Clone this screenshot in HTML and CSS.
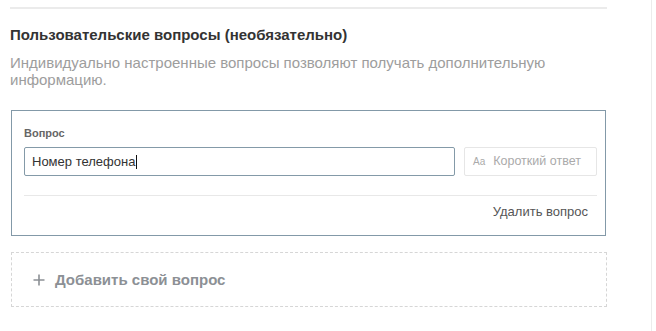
FILE: index.html
```html
<!DOCTYPE html>
<html lang="ru">
<head>
    <meta charset="UTF-8">
    <meta name="viewport" content="width=device-width, initial-scale=1.0">
    <title>Пользовательские вопросы</title>
    <link rel="stylesheet" href="styles.css">
</head>
<body>
    <div class="page">
        <div class="panel">
            <hr class="divider">

            <!-- Custom questions -->
            <section class="custom-questions">
                <h3>Пользовательские вопросы (необязательно)</h3>
                <p class="hint">Индивидуально настроенные вопросы позволяют получать дополнительную информацию.</p>

                <div class="question-card">
                    <label class="question-label">Вопрос</label>
                    <div class="question-row">
                        <div class="field">Номер телефона<span class="caret"></span></div>
                        <div class="answer-type"><span class="aa">Aa</span>Короткий ответ</div>
                    </div>
                    <div class="card-footer">
                        <span class="remove-link">Удалить вопрос</span>
                    </div>
                </div>

                <div class="add-question">
                    <svg class="plus" width="12" height="12" viewBox="0 0 12 12">
                        <path d="M6 0.5V11.5M0.5 6H11.5" stroke="#8c9095" stroke-width="1.6" fill="none"/>
                    </svg>
                    Добавить свой вопрос
                </div>
            </section>
        </div>
    </div>
</body>
</html>
```

FILE: styles.css
```css
body { margin: 0; background: #fff; font-family: "Liberation Sans", Arial, sans-serif; }
.page { width: 652px; height: 100vh; border-right: 1px solid #ececec; box-sizing: border-box; }
.panel { width: 597px; padding: 7px 0 0 10px; }
.divider { height: 2px; margin: 0; border: 0; background: #ebebeb; }

.custom-questions h3 { margin: 17px 0 0; font-size: 15px; line-height: 18px; color: #333; }
.hint { margin: 10px 0 0; font-size: 15px; line-height: 17px; color: #9d9d9d; }

.question-card { margin: 22px 1px 0; padding: 14px 8px 15px 12px; border: 1px solid #8399a8; }
.question-label { display: block; font-size: 11px; font-weight: bold; line-height: 16px; color: #666; }
.question-row { display: flex; gap: 9px; margin-top: 6px; }
.field { flex: 1; height: 29px; box-sizing: border-box; padding: 0 7px; border: 1px solid #849aa8; border-radius: 2px; font-size: 13px; line-height: 27px; color: #333; }
.caret { display: inline-block; width: 1px; height: 14px; margin-left: 1px; vertical-align: -3px; background: #111; }
.answer-type { width: 133px; height: 29px; box-sizing: border-box; padding-left: 8px; border: 1px solid #e6e6e6; border-radius: 2px; font-size: 12.5px; line-height: 27px; color: #aaa; white-space: nowrap; }
.aa { margin-right: 8px; font-size: 10px; }
.card-footer { margin-top: 19px; padding: 8px 9px 0 0; border-top: 1px solid #e8e8e8; text-align: right; font-size: 13px; line-height: 16px; color: #555; }
.remove-link { cursor: pointer; }

.add-question { display: flex; align-items: center; height: 55px; box-sizing: border-box; margin: 16px 0 0 1px; padding-left: 21px; border: 1px dashed #d6d6d6; font-size: 15px; font-weight: bold; color: #8c9095; cursor: pointer; }
.plus { margin-right: 10px; }
```
